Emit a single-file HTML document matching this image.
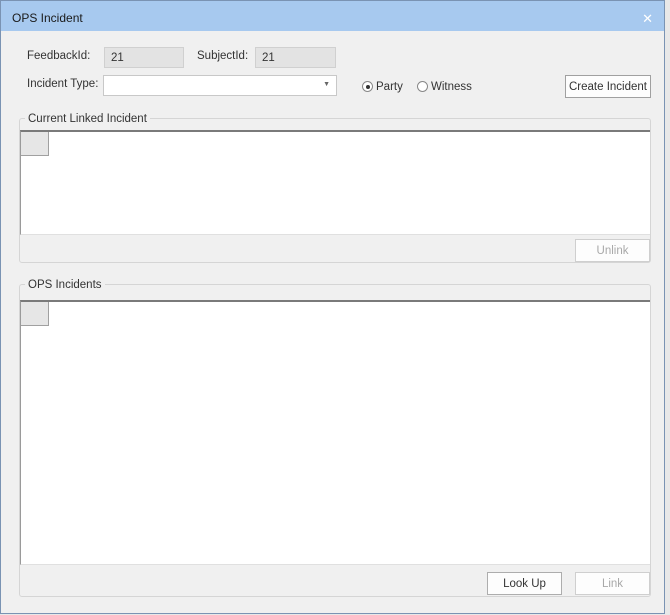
<!DOCTYPE html>
<html><head><style>
*{box-sizing:border-box;margin:0;padding:0}
body{width:670px;height:615px;background:#e8e8e8;font-family:"Liberation Sans",sans-serif;font-size:11.5px;color:#333;position:relative;overflow:hidden}
.win{position:absolute;left:0;top:0;width:665px;height:614px;background:#f0f0f0}
.frame{position:absolute;left:0;top:0;width:665px;height:614px;border:1px solid #7a93b3;pointer-events:none}
.title{position:absolute;left:0;top:0;width:665px;height:31px;background:#a7c9ef;color:#1a1a1a;font-size:12px;line-height:37px;padding-left:12px}
.x{position:absolute;right:12px;top:0;color:#fff;font-size:13px}
.abs{position:absolute}
.tb{position:absolute;background:#e3e3e3;border:1px solid #d0d0d0;padding-left:6px;line-height:21px;font-size:11.5px}
.btn{position:absolute;background:#fdfdfd;border:1px solid #adadad;text-align:center;line-height:23px}
.dis{color:#a8a8a8;border-color:#cfcfcf}
.grp{position:absolute;border:1px solid #d5d5d5;border-radius:3px}
.lg{position:absolute;background:#f0f0f0;padding:0 3px;line-height:13px}
.grid{position:absolute;background:#fff;border-top:2px solid #7a7a7a;border-left:1px solid #9a9a9a}
.hc{position:absolute;left:0;top:0;width:28px;height:24px;background:#e6e6e6;border-right:1px solid #a0a0a0;border-bottom:1px solid #a0a0a0}
.rad{position:absolute;width:11px;height:11px;border:1px solid #888;border-radius:50%;background:#fff}
</style></head><body>
<div class="win">
<div class="title">OPS Incident<span class="x">✕</span></div>
<div class="abs" style="left:27px;top:50px">FeedbackId:</div>
<div class="tb" style="left:104px;top:47px;width:80px;height:21px">21</div>
<div class="abs" style="left:197px;top:50px">SubjectId:</div>
<div class="tb" style="left:255px;top:47px;width:81px;height:21px">21</div>
<div class="abs" style="left:27px;top:78px">Incident Type:</div>
<div class="abs" style="left:103px;top:75px;width:234px;height:21px;background:#fff;border:1px solid #c8c8c8"><span class="abs" style="right:6px;top:5px;font-size:7px;color:#666">▼</span></div>
<div class="rad" style="left:362px;top:81px"><div style="position:absolute;left:3px;top:3px;width:4px;height:4px;border-radius:50%;background:#333"></div></div>
<div class="abs" style="left:376px;top:81px">Party</div>
<div class="rad" style="left:417px;top:81px"></div>
<div class="abs" style="left:431px;top:81px">Witness</div>
<div class="btn" style="left:565px;top:75px;width:86px;height:23px;border-color:#a0a0a0;line-height:23px">Create Incident</div>

<div class="grp" style="left:19px;top:118px;width:632px;height:145px"></div>
<div class="lg" style="left:25px;top:113px">Current Linked Incident</div>
<div class="grid" style="left:20px;top:130px;width:630px;height:105px;border-bottom:1px solid #e0e0e0"><div class="hc"></div></div>
<div class="btn dis" style="left:575px;top:239px;width:75px;height:23px">Unlink</div>

<div class="grp" style="left:19px;top:284px;width:632px;height:313px"></div>
<div class="lg" style="left:25px;top:279px">OPS Incidents</div>
<div class="grid" style="left:20px;top:300px;width:630px;height:265px;border-bottom:1px solid #e0e0e0"><div class="hc"></div></div>
<div class="btn" style="left:487px;top:572px;width:75px;height:23px">Look Up</div>
<div class="btn dis" style="left:575px;top:572px;width:75px;height:23px">Link</div>
<div class="frame"></div>
</div>
</body></html>
